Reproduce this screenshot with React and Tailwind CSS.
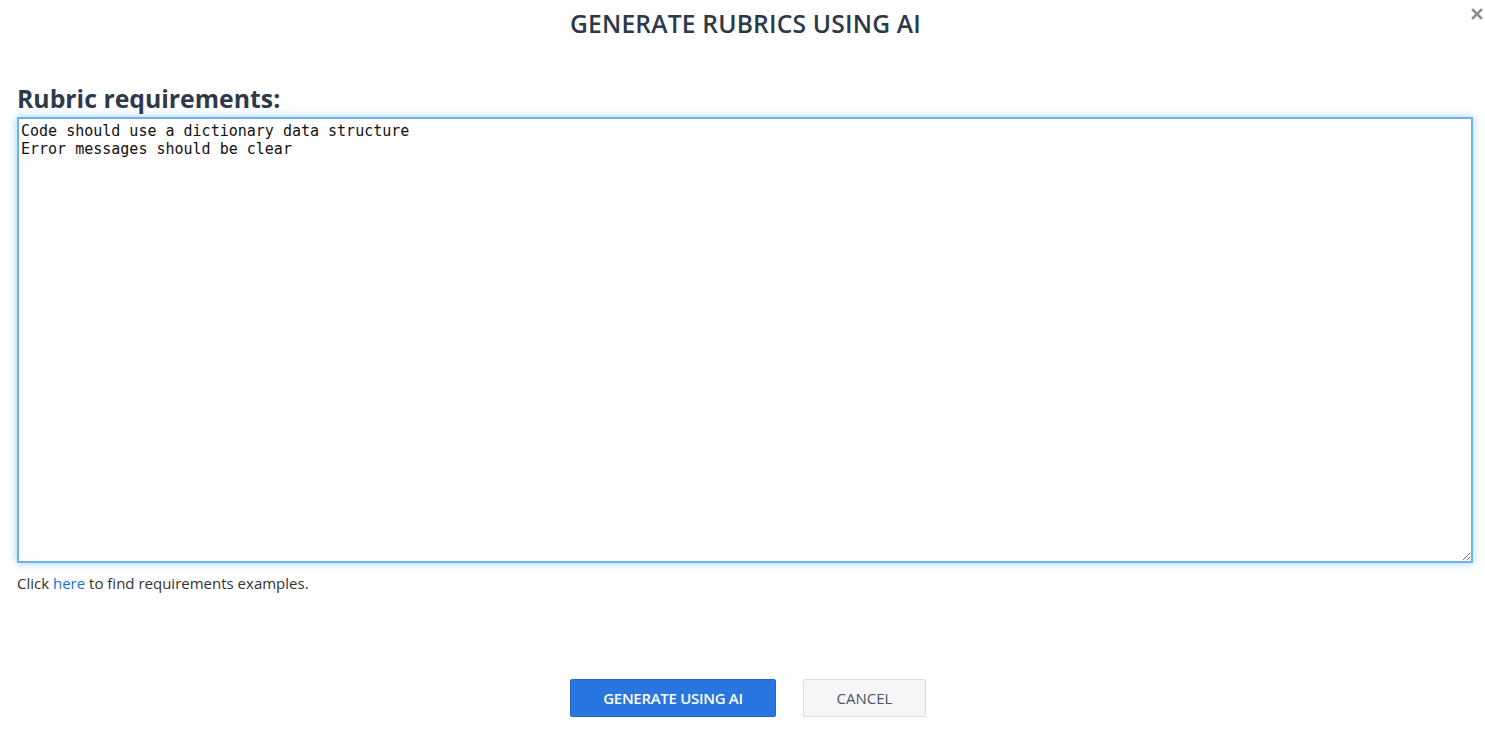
import React from "react";

const App = () => {
  return (
    <div className="w-[1485px] h-[740px] bg-white relative font-['Open_Sans',sans-serif] text-[#2d3a4b] overflow-hidden">
      <button className="absolute right-[-1px] top-[5px] w-[18px] h-[18px] flex items-center justify-center text-[#8a8f96]">
        <svg width="12" height="12" viewBox="0 0 12 12">
          <path d="M2 2 L10 10 M10 2 L2 10" stroke="currentColor" strokeWidth="2.6" strokeLinecap="square" />
        </svg>
      </button>

      <h1 className="text-center text-[24.6px] font-semibold tracking-[0.2px] pt-[8px] pl-[6px] leading-[32px] text-[#2b3949]">
        GENERATE RUBRICS USING AI
      </h1>

      <div className="px-[17px] pr-[12px] mt-[45px]">
        <label className="block text-[24.8px] font-bold leading-[27px] text-[#2d3a4b]">
          Rubric requirements:
        </label>
        <textarea
          className="block mt-[5px] w-[1456px] h-[446px] border-2 border-[#6cb2ec] outline-none shadow-[0_0_8px_rgba(102,175,233,0.6)] px-[2px] pt-[3px] pb-[2px] font-['DejaVu_Sans_Mono',monospace] text-[15px] leading-[18px] text-[#111] resize"
          defaultValue={"Code should use a dictionary data structure\nError messages should be clear"}
        />
        <p className="mt-[10px] text-[15px] leading-[20px] text-[#333]">
          Click <a href="#" className="text-[#1a6fd6]">here</a> to find requirements examples.
        </p>
      </div>

      <div className="flex justify-center gap-[27px] mt-[86px] pl-[11px]">
        <button className="w-[206px] h-[38px] bg-[#2a76e0] border border-[#2266c6] rounded-[2px] text-white text-[15px] font-semibold tracking-[-0.3px]">
          GENERATE USING AI
        </button>
        <button className="w-[123px] h-[38px] bg-[#f5f6f8] border border-[#d9dce1] rounded-[2px] text-[#4c5563] text-[15px]">
          CANCEL
        </button>
      </div>
    </div>
  );
};

export default App;
